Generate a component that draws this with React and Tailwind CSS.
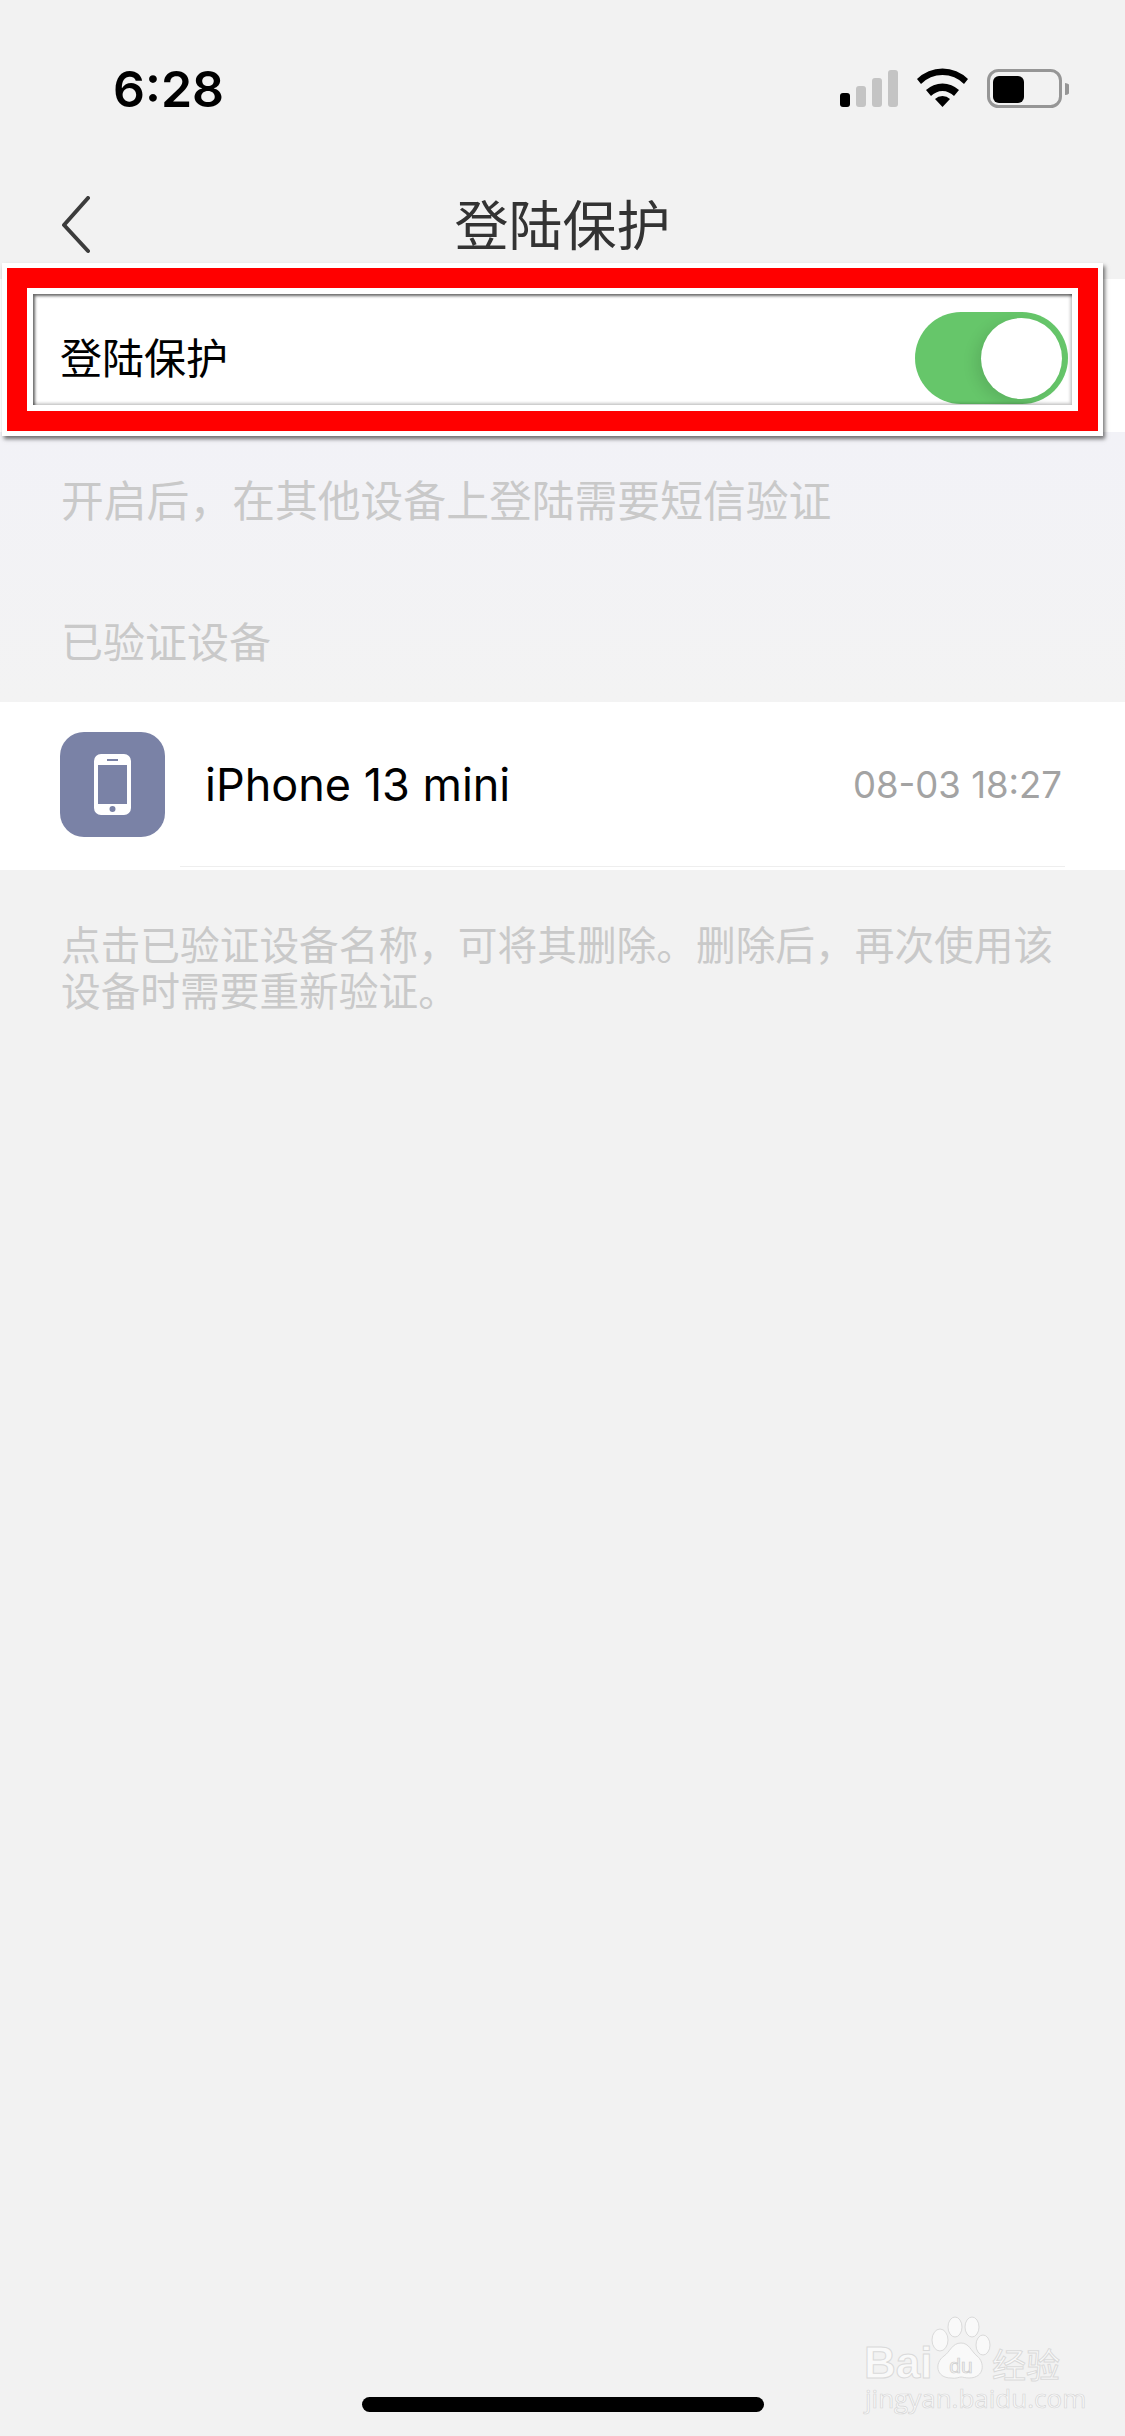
import React from "react";

const cjk = "font-['Noto_Sans_CJK_SC','Noto_Sans',sans-serif]";

const StatusBar = () => (
  <div className="h-[180px] flex items-start pt-[64px] pl-[113px] pr-[56px]">
    <span className="font-['Inter',sans-serif] text-[50px] leading-[50px] font-semibold text-black">6:28</span>
    <svg className="ml-auto mt-[4px]" width="232" height="40" viewBox="0 0 232 40">
      <rect x="3" y="25" width="10" height="14" rx="3" fill="#000" />
      <rect x="19" y="18" width="10" height="21" rx="3" fill="#c4c4c4" />
      <rect x="35" y="10" width="10" height="29" rx="3" fill="#c4c4c4" />
      <rect x="51" y="2" width="10" height="37" rx="3" fill="#c4c4c4" />
      <path d="M80 12 A36 36 0 0 1 131 12 L127 17 A30 30 0 0 0 84 17 Z" fill="#000" transform="translate(0 -1)" />
      <path d="M89 22 A24 24 0 0 1 122 22 L117 28 A16 16 0 0 0 94 28 Z" fill="#000" />
      <path d="M98 31 A11 11 0 0 1 113 31 L105.5 39 Z" fill="#000" />
      <rect x="151.5" y="2.5" width="72" height="36" rx="10" fill="none" stroke="#969696" strokeWidth="3" />
      <rect x="156" y="8" width="31" height="27" rx="6" fill="#000" />
      <path d="M228 15 a6 6 0 0 1 0 12 Z" fill="#969696" />
    </svg>
  </div>
);

const PhoneIcon = () => (
  <svg width="37" height="61" viewBox="0 0 37 61">
    <path
      fillRule="evenodd"
      fill="#fff"
      d="M7 0h23a7 7 0 0 1 7 7v47a7 7 0 0 1-7 7H7a7 7 0 0 1-7-7V7a7 7 0 0 1 7-7zM4 11v39h29V11zM13 5v2h11V5zM18.500 52a3 3 0 1 0 0 6 3 3 0 0 0 0-6z"
    />
  </svg>
);

// red annotation frame drawn over the first row
const Annotation = () => (
  <div className="absolute left-[2px] top-[263px] w-[1101px] h-[173px] border-[5px] border-white shadow-[2px_3px_4px_rgba(0,0,0,0.55)] pointer-events-none">
    <div className="w-full h-full border-[20px] border-[#ff0000]">
      <div className="w-full h-full border-[6px] border-white">
        <div className="w-full h-full shadow-[inset_2px_2px_3px_rgba(0,0,0,0.6),inset_-2px_-2px_3px_rgba(0,0,0,0.2)]" />
      </div>
    </div>
  </div>
);

const Watermark = () => (
  <div className="absolute left-[863px] top-[2316px] w-[202px] h-[96px]">
    <span className="absolute left-[1px] top-[22px] font-['Liberation_Sans',sans-serif] font-bold text-[44px] leading-[50px] text-[#f9f9f9] [-webkit-text-stroke:1px_#dadada]">Bai</span>
    <svg className="absolute left-[68px] top-0" width="60" height="64" viewBox="0 0 60 64">
      <g fill="#f9f9f9" stroke="#dadada" strokeWidth="1">
        <ellipse cx="9" cy="24" rx="8" ry="11" />
        <ellipse cx="24" cy="11" rx="7" ry="10" />
        <ellipse cx="41" cy="11" rx="7" ry="10" />
        <ellipse cx="52" cy="29" rx="7" ry="10" />
        <path d="M30 27c8 0 10 8 16 13 8 6 8 22-8 22-4 0-6-1-8-1s-5 2-10 1C5 62 3 47 13 40c6-4 8-13 17-13z" />
      </g>
      <text x="30" y="57" textAnchor="middle" fontFamily="Liberation Sans" fontSize="21" fill="#f2f2f2" stroke="#cccccc" strokeWidth="0.7">du</text>
    </svg>
    <span className={`absolute left-[129px] top-[26px] text-[34px] leading-[44px] text-[#f9f9f9] [-webkit-text-stroke:1px_#dadada] ${cjk}`}>经验</span>
    <span className="absolute left-[2px] top-[68px] font-['Open_Sans',sans-serif] text-[26px] leading-[28px] whitespace-nowrap text-[#f9f9f9] [-webkit-text-stroke:0.7px_#d6d6d6]">jingyan.baidu.com</span>
  </div>
);

export default function App() {
  return (
    <div className={`relative w-[1125px] h-[2436px] overflow-hidden bg-[#f2f2f2] ${cjk}`}>
      <StatusBar />

      {/* nav bar */}
      <div className="relative h-[99px] flex items-center justify-center">
        <svg className="absolute left-[60px] top-[16px]" width="32" height="58" viewBox="0 0 32 58">
          <path d="M28 2 L4 29 L28 55" fill="none" stroke="#3c3c3c" strokeWidth="4" strokeLinecap="round" strokeLinejoin="round" />
        </svg>
        <h1 className="text-[54px] leading-[60px] font-normal text-[#333333] -mt-[13px]">登陆保护</h1>
      </div>

      {/* switch row */}
      <div className="h-[153px] bg-white flex items-center pl-[60px] pr-[57px]">
        <span className="text-[42px] leading-[50px] text-black">登陆保护</span>
        <div className="ml-auto mt-[5px] w-[153px] h-[92px] rounded-full bg-[#66c66a] flex justify-end items-center pr-[6px]">
          <div className="w-[81px] h-[81px] rounded-full bg-white shadow-[-6px_4px_14px_rgba(0,0,0,0.1)]" />
        </div>
      </div>

      <div className="bg-linear-to-b from-[#f2f2f7] to-[#f3f3f3] h-[270px] flex flex-col text-[#c9c9c9] leading-[50px] px-[61px]">
        <p className="mt-[41px] text-[42.800px]">开启后，在其他设备上登陆需要短信验证</p>
        <p className="mt-[92px] text-[42px]">已验证设备</p>
      </div>

      {/* device row */}
      <div className="relative h-[168px] bg-white flex items-center pl-[60px] pr-[63px] pb-[3px]">
        <div className="w-[105px] h-[105px] rounded-[24px] bg-[#7a82a6] flex items-center justify-center">
          <PhoneIcon />
        </div>
        <span className="ml-[40px] font-['Inter',sans-serif] text-[45px] leading-[54px] text-black">iPhone 13 mini</span>
        <span className="ml-auto font-['Inter',sans-serif] text-[36.500px] leading-[44px] text-[#a3a3a3]">08-03 18:27</span>
        <div className="absolute left-[180px] right-[60px] bottom-[3px] h-[1px] bg-[#eeeeee]" />
      </div>

      <p className="px-[61px] pt-[50px] text-[#c9c9c9] text-[39.700px] leading-[46px] whitespace-nowrap">
        点击已验证设备名称，可将其删除。删除后，再次使用该
        <br />
        设备时需要重新验证。
      </p>

      <div className="absolute left-[362px] top-[2397px] w-[402px] h-[15px] rounded-full bg-black" />
      <Watermark />
      <Annotation />
    </div>
  );
}
